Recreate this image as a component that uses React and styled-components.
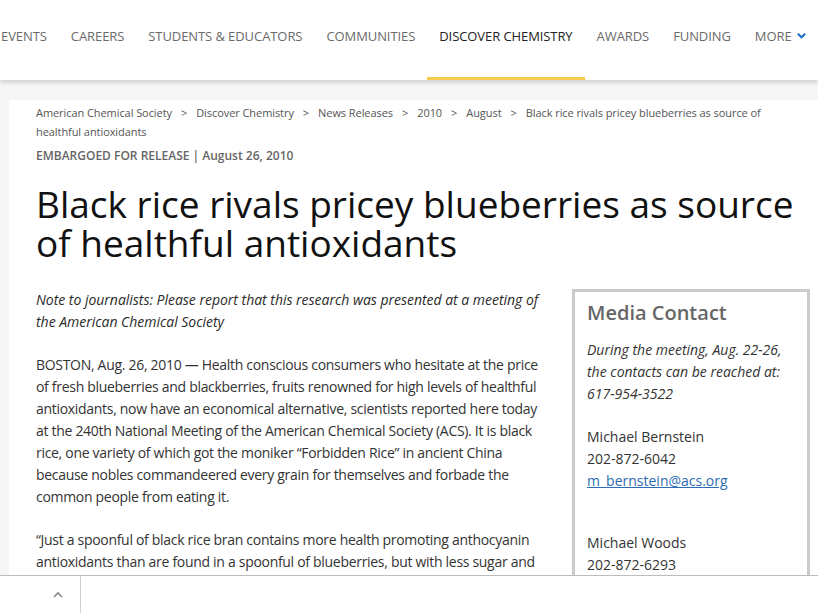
import React from 'react';
import styled, { createGlobalStyle } from 'styled-components';

const GlobalStyle = createGlobalStyle`
  html, body {
    margin: 0;
    padding: 0;
    height: 100%;
    overflow: hidden;
  }
  body {
    font-family: 'Open Sans', 'Noto Sans', sans-serif;
    color: #333;
    background: #fff;
  }
  #root {
    height: 100%;
  }
`;

const Page = styled.div`
  display: flex;
  flex-direction: column;
  height: 100vh;
  overflow: hidden;
`;

const Header = styled.header`
  position: relative;
  z-index: 2;
  flex: 0 0 80px;
  background: #fff;
  box-shadow: 0 2px 5px rgba(0, 0, 0, 0.18);
  display: flex;
  overflow: hidden;
`;

const Nav = styled.nav`
  display: flex;
  margin-left: -11px;
  white-space: nowrap;
`;

const NavItem = styled.a`
  display: flex;
  align-items: flex-start;
  padding: 27px 12px 0;
  height: 80px;
  box-sizing: border-box;
  font-size: 13px;
  letter-spacing: -0.08px;
  text-transform: uppercase;
  color: ${p => (p.$active ? '#222' : '#6a6a6a')};
  border-bottom: 3px solid ${p => (p.$active ? '#f4cc4c' : 'transparent')};
  text-decoration: none;
  gap: 4px;
`;

const Chevron = styled.svg`
  width: 11px;
  height: 11px;
  margin-top: 3px;
`;

const Main = styled.main`
  flex: 1;
  min-height: 0;
  background: #f6f6f6;
  padding: 20px 0 0 9px;
  overflow: hidden;
`;

const Panel = styled.div`
  background: #fff;
  height: 100%;
  padding: 3px 0 0 27px;
  box-sizing: border-box;
`;

const Breadcrumb = styled.div`
  font-size: 11px;
  line-height: 19px;
  letter-spacing: -0.07px;
  color: #555;
  width: 740px;
`;

const Sep = styled.span`
  margin: 0 9px;
`;

const Embargo = styled.div`
  margin-top: 5px;
  font-size: 12px;
  line-height: 20px;
  font-weight: 600;
  color: #666;
`;

const Title = styled.h1`
  margin: 18px 0 0;
  font-size: 37px;
  line-height: 39px;
  font-weight: 400;
  color: #111;
  width: 770px;
`;

const Columns = styled.div`
  display: flex;
  gap: 24px;
  margin-top: 27px;
  align-items: flex-start;
`;

const Article = styled.article`
  width: 512px;
  font-size: 14px;
  line-height: 22px;
  letter-spacing: -0.3px;
  color: #333;
`;

const Para = styled.p`
  margin: 0 0 21px;
  font-style: ${p => (p.$italic ? 'italic' : 'normal')};
  letter-spacing: ${p => (p.$italic ? '-0.02px' : 'inherit')};
  color: ${p => (p.$italic ? '#2a2a2a' : '#333')};
`;

const Sidebar = styled.aside`
  width: 238px;
  box-sizing: border-box;
  border: 3px solid #cbcbcb;
  padding: 7px 12px 20px;
  font-size: 14px;
  line-height: 22px;
  color: #333;
`;

const SideTitle = styled.h2`
  margin: 0 0 12px;
  font-size: 20px;
  line-height: 28px;
  font-weight: 600;
  color: #666;
`;

const SideBlock = styled.p`
  margin: 0 0 ${p => p.$gap || 21}px;
  font-style: ${p => (p.$italic ? 'italic' : 'normal')};
`;

const Email = styled.a`
  color: #2c6db4;
  text-decoration: underline;
`;

const Footer = styled.footer`
  flex: 0 0 37px;
  background: #fff;
  border-top: 1px solid #bdbdbd;
  display: flex;
`;

const UpButton = styled.div`
  width: 81px;
  border-right: 1px solid #d0d0d0;
  display: flex;
  align-items: center;
  justify-content: center;
  padding-left: 36px;
  box-sizing: border-box;
`;

const navItems = [
  'Events',
  'Careers',
  'Students & Educators',
  'Communities',
  'Discover Chemistry',
  'Awards',
  'Funding',
];

const crumbs = [
  'American Chemical Society',
  'Discover Chemistry',
  'News Releases',
  '2010',
  'August',
];

export default function App() {
  return (
    <Page>
      <GlobalStyle />
      <Header>
        <Nav>
          {navItems.map(item => (
            <NavItem key={item} $active={item === 'Discover Chemistry'}>
              {item}
            </NavItem>
          ))}
          <NavItem>
            More
            <Chevron viewBox="0 0 12 12">
              <path d="M2 4l4 4 4-4" fill="none" stroke="#1a6fc4" strokeWidth="2.2" />
            </Chevron>
          </NavItem>
        </Nav>
      </Header>

      <Main>
        <Panel>
          <Breadcrumb>
            {crumbs.map(c => (
              <React.Fragment key={c}>
                {c}
                <Sep>&gt;</Sep>
              </React.Fragment>
            ))}
            Black rice rivals pricey blueberries as source of healthful antioxidants
          </Breadcrumb>
          <Embargo>EMBARGOED FOR RELEASE | August 26, 2010</Embargo>
          <Title>Black rice rivals pricey blueberries as source of healthful antioxidants</Title>

          <Columns>
            <Article>
              <Para $italic>
                Note to journalists: Please report that this research was presented at a meeting of
                the American Chemical Society
              </Para>
              <Para>
                BOSTON, Aug. 26, 2010 — Health conscious consumers who hesitate at the price of
                fresh blueberries and blackberries, fruits renowned for high levels of healthful
                antioxidants, now have an economical alternative, scientists reported here today at
                the 240th National Meeting of the American Chemical Society (ACS). It is black rice,
                one variety of which got the moniker “Forbidden Rice” in ancient China because
                nobles commandeered every grain for themselves and forbade the common people from
                eating it.
              </Para>
              <Para>
                “Just a spoonful of black rice bran contains more health promoting anthocyanin
                antioxidants than are found in a spoonful of blueberries, but with less sugar and
                more fiber and vitamin E antioxidants,” said Zhimin Xu, Ph.D.
              </Para>
            </Article>

            <Sidebar>
              <SideTitle>Media Contact</SideTitle>
              <SideBlock $italic>
                During the meeting, Aug. 22-26, the contacts can be reached at: 617-954-3522
              </SideBlock>
              <SideBlock $gap={40}>
                Michael Bernstein
                <br />
                202-872-6042
                <br />
                <Email href="#">m_bernstein@acs.org</Email>
              </SideBlock>
              <SideBlock>
                Michael Woods
                <br />
                202-872-6293
                <br />
                <Email href="#">m_woods@acs.org</Email>
              </SideBlock>
            </Sidebar>
          </Columns>
        </Panel>
      </Main>

      <Footer>
        <UpButton>
          <svg width="12" height="8" viewBox="0 0 12 8">
            <path d="M2 6l4-4 4 4" fill="none" stroke="#888" strokeWidth="1.6" />
          </svg>
        </UpButton>
      </Footer>
    </Page>
  );
}
